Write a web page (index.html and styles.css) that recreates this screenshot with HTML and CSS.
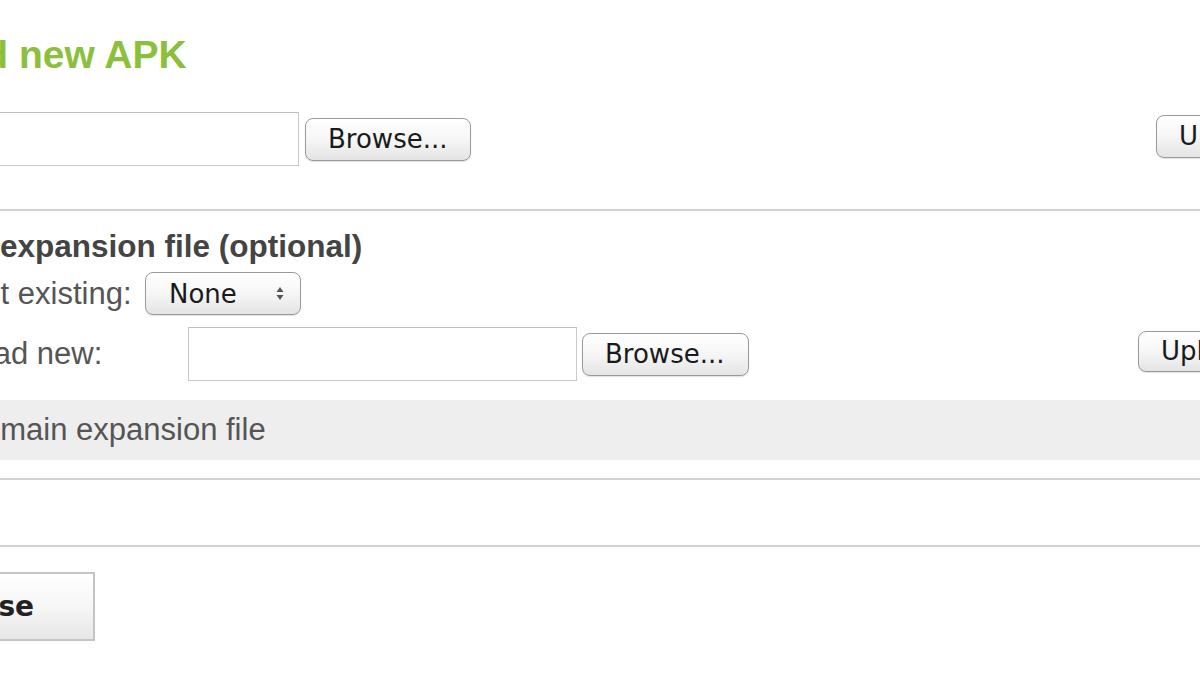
FILE: index.html
```html
<!DOCTYPE html>
<html lang="en">
<head>
<meta charset="utf-8">
<title>Upload new APK</title>
<link rel="stylesheet" href="styles.css">
</head>
<body>
<div class="dialog">
  <h1 class="title">Upload new APK</h1>

  <div class="row row-apk">
    <input class="field field-apk" type="text" aria-label="APK file">
    <button class="btn btn-browse" type="button">Browse...</button>
    <button class="btn btn-upload btn-upload-apk" type="button">Upload</button>
  </div>

  <hr class="rule rule-top">

  <h2 class="heading">Add expansion file (optional)</h2>

  <div class="row row-select">
    <span class="label label-select">Select existing:</span>
    <div class="select">
      <span class="select-value">None</span>
      <svg class="select-arrows" width="8" height="15" viewBox="0 0 8 15" aria-hidden="true">
        <path d="M4 1 L7.5 6 L0.5 6 Z" fill="#555"/>
        <path d="M4 14 L7.5 9 L0.5 9 Z" fill="#555"/>
      </svg>
    </div>
  </div>

  <div class="row row-new">
    <span class="label label-new">Upload new:</span>
    <input class="field field-new" type="text" aria-label="Expansion file">
    <button class="btn btn-browse btn-browse-new" type="button">Browse...</button>
    <button class="btn btn-upload btn-upload-new" type="button">Upload</button>
  </div>

  <div class="status-bar">No main expansion file</div>

  <hr class="rule rule-mid">
  <hr class="rule rule-bottom">

  <button class="btn-close" type="button">Close</button>
</div>
</body>
</html>
```

FILE: styles.css
```css
html, body {
  margin: 0;
  padding: 0;
  background: #ffffff;
  overflow: hidden;
  width: 1200px;
  height: 675px;
}

.dialog {
  margin-left: -70px;
  width: 1500px;
  display: flex;
  flex-direction: column;
  align-items: flex-start;
  font-family: "Liberation Sans", Arial, sans-serif;
  color: #555555;
}

.title {
  margin: 33px 0 0 -54px;
  font-size: 39px;
  line-height: 44px;
  font-weight: bold;
  color: #8cbf3c;
}

.row {
  display: flex;
  align-items: center;
}

.row-apk {
  margin-top: 35px;
  height: 54px;
}

.field {
  box-sizing: border-box;
  height: 54px;
  border: 1px solid #c9c9c9;
  border-top-color: #bdbdbd;
  background: #ffffff;
  padding: 0;
  margin: 0;
  outline: none;
}

.field-apk {
  width: 389px;
  margin-left: -20px;
}

.btn {
  box-sizing: border-box;
  height: 43px;
  margin: 0;
  padding: 0 22px;
  border: 1px solid #9a9a9a;
  border-radius: 8px;
  background: linear-gradient(#ffffff 0%, #f6f6f6 50%, #e4e4e4 100%);
  box-shadow: 0 1px 1px rgba(0, 0, 0, 0.12);
  font-family: "DejaVu Sans", "Liberation Sans", sans-serif;
  font-size: 26px;
  color: #1a1a1a;
  text-align: left;
  white-space: nowrap;
}

.btn-browse {
  width: 166px;
  margin-left: 6px;
}

.btn-upload {
  width: 140px;
}

.btn-upload-apk {
  margin-left: 685px;
  margin-top: -6px;
}

.rule {
  width: 100%;
  height: 2px;
  border: 0;
  margin: 0;
  background: #d2d2d2;
}

.rule-top {
  margin-top: 43px;
}

.heading {
  margin: 17px 0 0 0;
  font-size: 31.5px;
  line-height: 36px;
  font-weight: bold;
  color: #444444;
}

.label {
  font-size: 31px;
  line-height: 34px;
  color: #555555;
  white-space: nowrap;
}

.row-select {
  margin-top: 8px;
  height: 43px;
}

.label-select {
  width: 222px;
  margin-left: -7px;
}

.select {
  box-sizing: border-box;
  width: 156px;
  height: 43px;
  padding: 0 16px 0 23px;
  border: 1px solid #9a9a9a;
  border-radius: 8px;
  background: linear-gradient(#ffffff 0%, #f6f6f6 50%, #e4e4e4 100%);
  box-shadow: 0 1px 1px rgba(0, 0, 0, 0.12);
  display: flex;
  align-items: center;
  justify-content: space-between;
  font-family: "DejaVu Sans", "Liberation Sans", sans-serif;
  font-size: 26px;
  color: #1a1a1a;
}

.select-arrows {
  display: block;
}

.row-new {
  margin-top: 12px;
  height: 54px;
}

.label-new {
  width: 258px;
}

.field-new {
  width: 389px;
}

.btn-browse-new {
  width: 167px;
  margin-left: 5px;
}

.btn-upload-new {
  margin-left: 389px;
  margin-top: -6px;
  height: 41px;
}

.status-bar {
  box-sizing: border-box;
  margin-top: 19px;
  width: 100%;
  height: 60px;
  padding-left: 22px;
  background: #eeeeee;
  display: flex;
  align-items: center;
  font-size: 31px;
  line-height: 34px;
  color: #555555;
}

.rule-mid {
  margin-top: 18px;
}

.rule-bottom {
  margin-top: 65px;
}

.btn-close {
  box-sizing: border-box;
  margin: 25px 0 0 0;
  width: 165px;
  height: 69px;
  padding: 0 0 0 17px;
  border: 2px solid #c4c4c4;
  border-radius: 0;
  background: linear-gradient(#ffffff 0%, #f5f5f5 55%, #e6e6e6 100%);
  font-family: "DejaVu Sans", "Liberation Sans", sans-serif;
  font-size: 28px;
  font-weight: bold;
  color: #222222;
  text-align: left;
}
```
